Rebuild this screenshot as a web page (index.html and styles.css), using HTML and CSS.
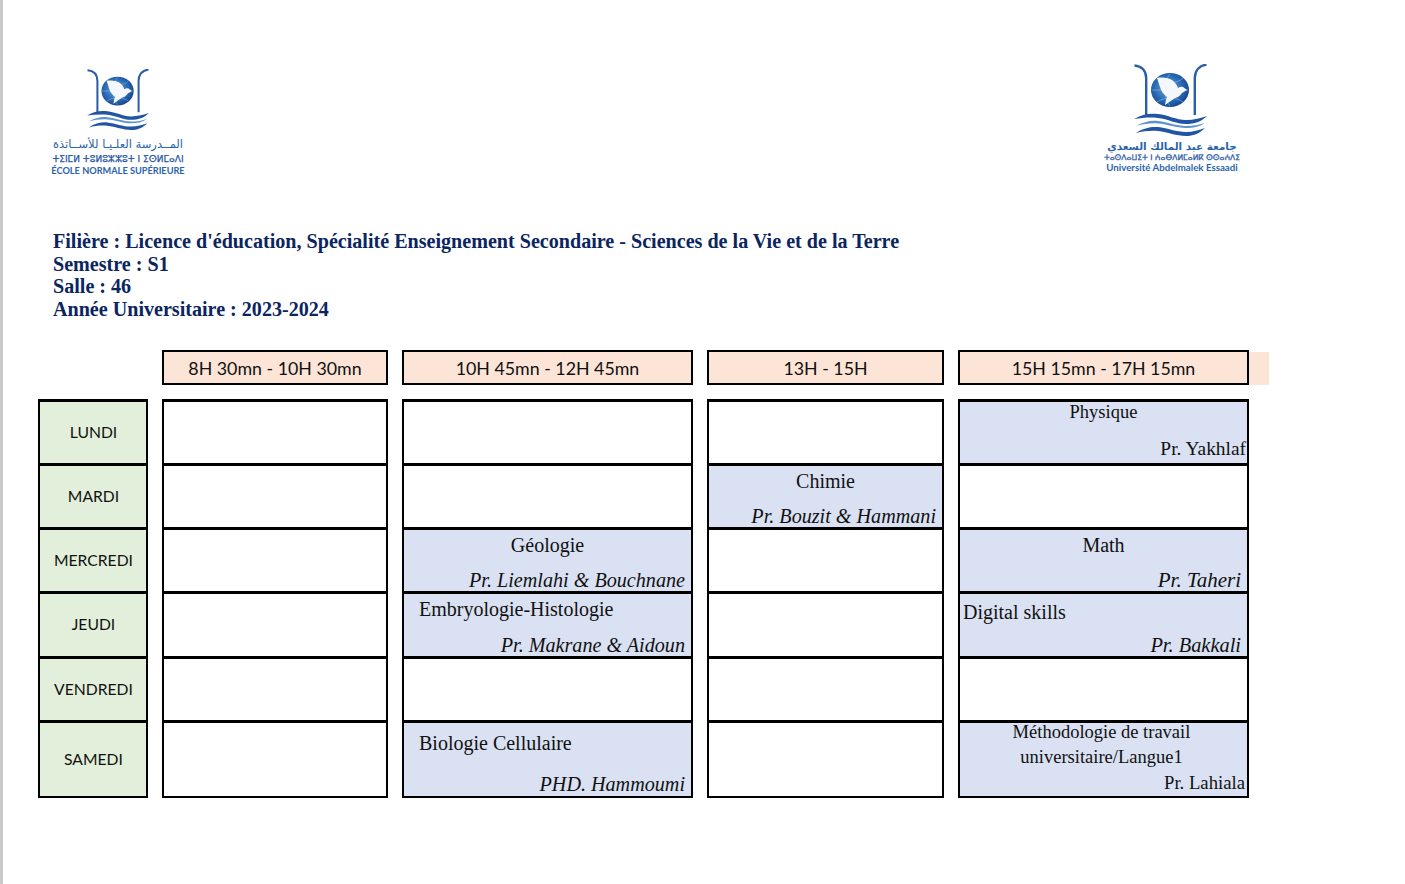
FILE: index.html
```html
<!DOCTYPE html>
<html lang="fr">
<head>
<meta charset="utf-8">
<title>Emploi du temps</title>
<link rel="stylesheet" href="styles.css">
</head>
<body>
<svg class="defs" width="0" height="0" aria-hidden="true">
  <defs>
    <radialGradient id="globe" cx="45%" cy="45%" r="60%">
      <stop offset="0" stop-color="#6fa8da"/>
      <stop offset="0.6" stop-color="#2a6db5"/>
      <stop offset="1" stop-color="#123f8e"/>
    </radialGradient>
    <symbol id="emblem" viewBox="0 0 73 72">
      <path d="M0.5 1.5C7 2 12 6 12.2 14V51" fill="none" stroke="#2a5fa8" stroke-width="2.4"/>
      <path d="M72.5 0.5C66 1.5 61 6 60.8 14V51" fill="none" stroke="#2a5fa8" stroke-width="2.4"/>
      <ellipse cx="36" cy="26" rx="19" ry="17" fill="url(#globe)"/>
      <path d="M18 26H54M36 10C29 18 29 34 36 42M24 14C30 20 44 20 49 14M23 38C30 33 43 33 49 38" fill="none" stroke="#a9cbe9" stroke-width="0.5"/>
      <path d="M23 14C29 13 35 14 38 16C41 18 43 21 44 24C45.500 23 47.500 22.500 49 23L53 26L48 29C46 32 43.500 33.500 41 34L31 41C31.500 38 32 35.500 33 33C29.500 30 27 27 26 23C25 20 24 17 23 14Z" fill="#f4f7fb"/>
      <path d="M0 55C8 50 16 49 24 50C34 51 42 56 52 56C60 56 67 54 73 52C67 58 60 60 52 60C42 60 34 55 24 54C16 53 8 54 0 55Z" fill="#1f55a3"/>
      <path d="M2 62C9 58 17 56 24 57C34 58 42 62 52 62C59 62 65 61 71 59C65 63 59 64 52 64C42 64 34 60 24 59.500C17 59 9 60 2 62Z" fill="#5d93cc"/>
      <path d="M2 69C9 64 17 62.500 24 63C34 64 42 68 52 68C59 68 65 66 71 64C65 70 59 72 52 72C42 72 34 68 24 67C17 66.500 9 67 2 69Z" fill="#1f55a3"/>
    </symbol>
  </defs>
</svg>
<main class="page">
  <header class="logos">
    <div class="logo logo-ens">
      <svg class="emblem" viewBox="0 0 73 72"><use href="#emblem"/></svg>
      <p class="ar">المــدرسة العلـيـا للأســاتذة</p>
      <p class="tf">ⵜⵉⵏⵎⵍ ⵜⵓⵍⵓⵣⵣⵓⵜ ⵏ ⵉⵙⵍⵎⴰⴷⵏ</p>
      <p class="fr">ÉCOLE NORMALE SUPÉRIEURE</p>
    </div>
    <div class="logo logo-uae">
      <svg class="emblem" viewBox="0 0 73 72"><use href="#emblem"/></svg>
      <p class="ar">جامعة عبد المالك السعدي</p>
      <p class="tf">ⵜⴰⵙⴷⴰⵡⵉⵜ ⵏ ⵄⴰⴱⴷⵍⵎⴰⵍⴽ ⵙⵙⴰⵄⴷⵉ</p>
      <p class="fr">Université Abdelmalek Essaadi</p>
    </div>
  </header>

  <section class="info">
    <p>Filière : Licence d'éducation, Spécialité Enseignement Secondaire - Sciences de la Vie et de la Terre</p>
    <p>Semestre : S1</p>
    <p>Salle : 46</p>
    <p>Année Universitaire : 2023-2024</p>
  </section>

  <section class="timetable">
    <div class="corner"></div>
    <div class="slot">8H 30mn - 10H 30mn</div>
    <div class="slot">10H 45mn - 12H 45mn</div>
    <div class="slot">13H - 15H</div>
    <div class="slot slot-last">15H 15mn - 17H 15mn</div>

    <div class="spacer"></div>

    <div class="col days">
      <div class="cell day r1">LUNDI</div>
      <div class="cell day r2">MARDI</div>
      <div class="cell day r3">MERCREDI</div>
      <div class="cell day r4">JEUDI</div>
      <div class="cell day r5">VENDREDI</div>
      <div class="cell day r6">SAMEDI</div>
    </div>
    <div class="col">
      <div class="cell r1"></div>
      <div class="cell r2"></div>
      <div class="cell r3"></div>
      <div class="cell r4"></div>
      <div class="cell r5"></div>
      <div class="cell r6"></div>
    </div>
    <div class="col">
      <div class="cell r1"></div>
      <div class="cell r2"></div>
      <div class="cell r3 course">
        <div class="name center">Géologie</div>
        <div class="prof it">Pr. Liemlahi &amp; Bouchnane</div>
      </div>
      <div class="cell r4 course">
        <div class="name indent">Embryologie-Histologie</div>
        <div class="prof it">Pr. Makrane &amp; Aidoun</div>
      </div>
      <div class="cell r5"></div>
      <div class="cell r6 course">
        <div class="name indent n-bio">Biologie Cellulaire</div>
        <div class="prof it p-phd">PHD. Hammoumi</div>
      </div>
    </div>
    <div class="col">
      <div class="cell r1"></div>
      <div class="cell r2 course">
        <div class="name center">Chimie</div>
        <div class="prof it">Pr. Bouzit &amp; Hammani</div>
      </div>
      <div class="cell r3"></div>
      <div class="cell r4"></div>
      <div class="cell r5"></div>
      <div class="cell r6"></div>
    </div>
    <div class="col">
      <div class="cell r1 course small">
        <div class="name center n-phy">Physique</div>
        <div class="prof p-yak">Pr. Yakhlaf</div>
      </div>
      <div class="cell r2"></div>
      <div class="cell r3 course">
        <div class="name center">Math</div>
        <div class="prof it p-tah">Pr. Taheri</div>
      </div>
      <div class="cell r4 course">
        <div class="name n-dig">Digital skills</div>
        <div class="prof it p-bak">Pr. Bakkali</div>
      </div>
      <div class="cell r5"></div>
      <div class="cell r6 course small">
        <div class="name center n-met">Méthodologie de travail<br>universitaire/Langue1</div>
        <div class="prof p-lah">Pr. Lahiala</div>
      </div>
    </div>
  </section>
</main>
</body>
</html>
```

FILE: styles.css
```css
* { box-sizing: border-box; }
html, body { margin: 0; padding: 0; background: #fff; }
.defs { display: block; height: 0; }
p { margin: 0; }

.page {
  width: 1405px;
  height: 884px;
  overflow: hidden;
  border-left: 3px solid #c9c9c9;
  background: #fff;
}

.logos {
  display: flex;
  justify-content: space-between;
  align-items: flex-start;
  height: 230px;
  padding: 64px 166px 0 47px;
}
.logo {
  display: flex;
  flex-direction: column;
  align-items: center;
  color: #2a64ad;
  white-space: nowrap;
}
.logo-ens { width: 136px; padding-top: 5px; }
.logo-uae { width: 134px; }
.emblem { display: block; }
.logo-ens .emblem { width: 62px; height: 61px; }
.logo-uae .emblem { width: 73px; height: 72px; margin-left: -4px; }
.ar { font-family: "DejaVu Sans", sans-serif; line-height: 13px; }
.tf { font-family: "DejaVu Sans", sans-serif; line-height: 12px; color: #1f55a3; -webkit-text-stroke: 0.25px #1f55a3; }
.fr { font-family: "Lato", sans-serif; font-weight: 700; line-height: 10px; }
.logo-ens .ar { font-size: 11.5px; margin-top: 8px; }
.logo-ens .tf { font-size: 9px; margin-top: 2px; }
.logo-ens .fr { font-size: 9.2px; margin-top: 1px; }
.logo-uae .ar { font-size: 10.4px; margin-top: 4px; font-weight: 700; }
.logo-uae .tf { font-size: 7.6px; margin-top: -1px; }
.logo-uae .fr { font-size: 9.7px; margin-top: -2px; }

.info {
  height: 120px;
  padding-left: 50px;
  font-family: "Liberation Serif", serif;
  font-weight: 700;
  font-size: 20.1px;
  line-height: 22.6px;
  color: #0b2560;
}

.timetable {
  display: grid;
  grid-template-columns: 110px 226px 291px 237px 291px;
  grid-template-rows: 35px 14px auto;
  column-gap: 14px;
  margin-left: 35px;
  width: 1211px;
}
.spacer { grid-column: 1 / -1; }
.slot {
  position: relative;
  display: flex;
  align-items: center;
  justify-content: center;
  padding-top: 1px;
  border: 2px solid #000;
  background: #fce4d6;
  font-family: "Lato", sans-serif;
  font-size: 17.8px;
  color: #111;
}
.slot-last::after {
  content: "";
  position: absolute;
  left: calc(100% + 2px);
  top: 0;
  bottom: -2px;
  width: 20px;
  background: #fce4d6;
}

.col { display: flex; flex-direction: column; }
.cell {
  border-style: solid;
  border-color: #000;
  border-width: 0 2px 3px;
  background: #fff;
}
.r1 { height: 67px; border-top-width: 3px; }
.r2 { height: 64px; }
.r3 { height: 64px; }
.r4 { height: 65px; }
.r5 { height: 64px; }
.r6 { height: 75px; border-bottom-width: 2px; }

.day {
  display: flex;
  align-items: center;
  justify-content: center;
  padding: 0 0 2px 1px;
  background: #e2efda;
  font-family: "Lato", sans-serif;
  font-size: 15.7px;
  color: #111;
}

.course {
  display: flex;
  flex-direction: column;
  justify-content: space-between;
  background: #d9e1f2;
  font-family: "Liberation Serif", serif;
  font-size: 20px;
  line-height: 23px;
  color: #111;
  padding-top: 4px;
}
.small { font-size: 18.5px; line-height: 25px; padding-top: 0; }
.name.center { text-align: center; }
.indent { padding-left: 15px; }
.n-dig { padding-left: 3px; padding-top: 3px; }
.n-bio { padding-top: 5px; }
.n-phy { margin-top: -2px; }
.n-met { margin-top: -3px; padding-right: 4px; }
.prof { text-align: right; padding-right: 6px; }
.it { font-style: italic; font-size: 20.15px; margin-bottom: -1px; }
.p-phd { margin-bottom: 0; }
.p-tah { font-size: 21px; }
.p-bak { font-size: 20.4px; }
.p-yak { font-size: 19.4px; padding: 0 1px 2px 0; }
.p-lah { font-size: 18.7px; padding: 0 2px 4px 0; }
```
